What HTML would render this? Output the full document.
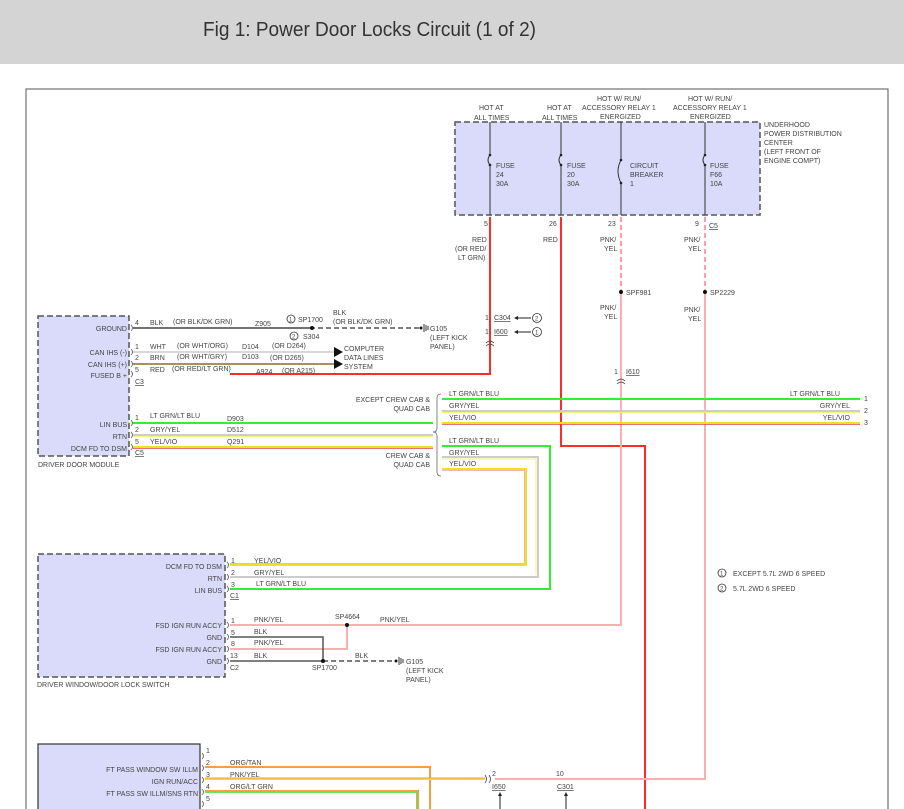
<!DOCTYPE html>
<html><head><meta charset="utf-8"><style>
html,body{margin:0;padding:0;background:#fff;width:904px;height:809px;overflow:hidden}
svg{display:block}
text{font-family:"Liberation Sans",Arial,sans-serif;font-size:7px;fill:#444}
.t{font-family:"Liberation Sans",Arial,sans-serif;font-size:20px;fill:#333}
</style></head><body>
<svg width="904" height="809" viewBox="0 0 904 809" xmlns="http://www.w3.org/2000/svg">
<rect x="0" y="0" width="904" height="64" fill="#d4d4d4"/>
<text x="203" y="36" class="t" textLength="333" lengthAdjust="spacingAndGlyphs">Fig 1: Power Door Locks Circuit (1 of 2)</text>
<!-- frame -->
<path d="M26 809V89H888V809" fill="none" stroke="#555" stroke-width="1"/>

<!-- fuse box -->
<rect x="455" y="122" width="305" height="93" fill="#dadafa" stroke="#555" stroke-width="1.5" stroke-dasharray="6,3"/>
<g stroke="#333" stroke-width="1" fill="none">
<path d="M490 122V155M490 165V215"/><path d="M490 155q-4 5 0 10"/>
<path d="M561 122V155M561 165V215"/><path d="M561 155q-4 5 0 10"/>
<path d="M621 122V160M621 183V215"/><path d="M621 160q-6 11 0 23"/>
<path d="M705 122V155M705 165V215"/><path d="M705 155q-4 5 0 10"/>
</g>
<g fill="#222"><circle cx="490" cy="155" r="1.3"/><circle cx="490" cy="165" r="1.3"/><circle cx="561" cy="155" r="1.3"/><circle cx="561" cy="165" r="1.3"/><circle cx="621" cy="160" r="1.3"/><circle cx="621" cy="183" r="1.3"/><circle cx="705" cy="155" r="1.3"/><circle cx="705" cy="165" r="1.3"/></g>
<text x="479" y="110">HOT AT</text><text x="474" y="120">ALL TIMES</text>
<text x="547" y="110">HOT AT</text><text x="542" y="120">ALL TIMES</text>
<text x="597" y="101">HOT W/ RUN/</text><text x="582" y="110">ACCESSORY RELAY 1</text><text x="600" y="119">ENERGIZED</text>
<text x="688" y="101">HOT W/ RUN/</text><text x="673" y="110">ACCESSORY RELAY 1</text><text x="690" y="119">ENERGIZED</text>
<text x="764" y="127">UNDERHOOD</text><text x="764" y="136">POWER DISTRIBUTION</text><text x="764" y="145">CENTER</text><text x="764" y="154">(LEFT FRONT OF</text><text x="764" y="163">ENGINE COMPT)</text>
<text x="496" y="168">FUSE</text><text x="496" y="177">24</text><text x="496" y="186">30A</text>
<text x="567" y="168">FUSE</text><text x="567" y="177">20</text><text x="567" y="186">30A</text>
<text x="630" y="168">CIRCUIT</text><text x="630" y="177">BREAKER</text><text x="630" y="186">1</text>
<text x="710" y="168">FUSE</text><text x="710" y="177">F66</text><text x="710" y="186">10A</text>
<text x="484" y="226">5</text><text x="549" y="226">26</text><text x="608" y="226">23</text><text x="695" y="226">9</text>
<text x="709" y="228" text-decoration="underline">C5</text>
<text x="472" y="242">RED</text><text x="455" y="251">(OR RED/</text><text x="458" y="260">LT GRN)</text>
<text x="543" y="242">RED</text>
<text x="600" y="242">PNK/</text><text x="604" y="251">YEL</text>
<text x="684" y="242">PNK/</text><text x="688" y="251">YEL</text>

<!-- red wires -->
<path d="M490 217V374H230" fill="none" stroke="#ff2a2a" stroke-width="2"/>
<path d="M561 217V446H645V809" fill="none" stroke="#ff2a2a" stroke-width="2"/>
<!-- pink dashed then solid -->
<path d="M621 217V292M705 217V292" stroke="#f8a0b0" stroke-width="2" stroke-dasharray="5,3"/>
<path d="M621 292V625H230" fill="none" stroke="#f9b0b0" stroke-width="2"/>
<path d="M705 292V779H495" fill="none" stroke="#f9b0b0" stroke-width="2"/>
<circle cx="621" cy="292" r="2" fill="#111"/><circle cx="705" cy="292" r="2" fill="#111"/>
<text x="626" y="295">SPF981</text><text x="710" y="295">SP2229</text>
<text x="600" y="310">PNK/</text><text x="604" y="319">YEL</text>
<text x="684" y="312">PNK/</text><text x="688" y="321">YEL</text>
<text x="614" y="374">1</text><text x="626" y="374" text-decoration="underline">I610</text>
<path d="M617 381q4-4 8 0M617 384q4-4 8 0" fill="none" stroke="#444" stroke-width=".8"/>

<!-- C304/I600 -->
<text x="485" y="320">1</text><text x="494" y="320" text-decoration="underline">C304</text>
<text x="485" y="334">1</text><text x="494" y="334" text-decoration="underline">I600</text>
<path d="M516 318H531M516 332H531" stroke="#222"/><path d="M514 318l4-2v4zM514 332l4-2v4z" fill="#222"/>
<circle cx="537" cy="318" r="4.5" fill="none" stroke="#333" stroke-width=".8"/><text x="535" y="320.5" style="font-size:6px">2</text>
<circle cx="537" cy="332" r="4.5" fill="none" stroke="#333" stroke-width=".8"/><text x="535" y="334.5" style="font-size:6px">1</text>
<path d="M486 343q4-4 8 0M486 346q4-4 8 0" fill="none" stroke="#444" stroke-width=".8"/>

<!-- driver door module -->
<rect x="38" y="316" width="91" height="140" fill="#dadafa" stroke="#555" stroke-width="1.5" stroke-dasharray="6,3"/>
<g text-anchor="end"><text x="127" y="331">GROUND</text><text x="127" y="355">CAN IHS (-)</text><text x="127" y="367">CAN IHS (+)</text><text x="127" y="378">FUSED B +</text><text x="127" y="427">LIN BUS</text><text x="127" y="439">RTN</text><text x="127" y="451">DCM FD TO DSM</text></g>
<text x="38" y="467">DRIVER DOOR MODULE</text>
<g fill="none" stroke="#555" stroke-width=".8"><path d="M131 325q3 3 0 6M131 349q3 3 0 6M131 361q3 3 0 6M131 371q3 3 0 6M131 420q3 3 0 6M131 432q3 3 0 6M131 444q3 3 0 6"/></g>
<path d="M133 328H310" stroke="#444" stroke-width="1.5"/>
<path d="M310 328H420" stroke="#555" stroke-width="1.5" stroke-dasharray="5,3"/>
<circle cx="312" cy="328" r="2" fill="#111"/><circle cx="421" cy="328" r="1.5" fill="#111"/>
<path d="M424 324V332M426 325V331M428 326V330" stroke="#333"/>
<text x="430" y="331">G105</text><text x="430" y="340">(LEFT KICK</text><text x="430" y="349">PANEL)</text>
<circle cx="291" cy="319" r="4" fill="none" stroke="#333" stroke-width=".8"/><text x="289" y="321.5" style="font-size:6px">1</text><text x="298" y="322">SP1700</text>
<circle cx="294" cy="336" r="4" fill="none" stroke="#333" stroke-width=".8"/><text x="292" y="338.5" style="font-size:6px">2</text><text x="303" y="339">S304</text>
<text x="333" y="315">BLK</text><text x="333" y="324">(OR BLK/DK GRN)</text>
<text x="135" y="325">4</text><text x="150" y="325">BLK</text><text x="173" y="324">(OR BLK/DK GRN)</text><text x="255" y="326">Z905</text>
<path d="M133 352H335" stroke="#ccc" stroke-width="1.5"/>
<path d="M133 364H335" stroke="#8a6a2a" stroke-width="1.5"/>
<path d="M334 347l9 5-9 5zM334 359l9 5-9 5z" fill="#111"/>
<text x="344" y="351">COMPUTER</text><text x="344" y="360">DATA LINES</text><text x="344" y="369">SYSTEM</text>
<text x="135" y="349">1</text><text x="150" y="349">WHT</text><text x="177" y="348">(OR WHT/ORG)</text><text x="242" y="349">D104</text><text x="272" y="348">(OR D264)</text>
<text x="135" y="360">2</text><text x="150" y="360">BRN</text><text x="177" y="359">(OR WHT/GRY)</text><text x="242" y="359">D103</text><text x="270" y="360">(OR D265)</text>
<text x="135" y="372">5</text><text x="150" y="372">RED</text><text x="172" y="371">(OR RED/LT GRN)</text><text x="256" y="374">A924</text><text x="282" y="373">(OR A215)</text>
<text x="135" y="384" text-decoration="underline">C3</text>
<path d="M133 423H433" stroke="#33ee33" stroke-width="2"/>
<path d="M133 435H433" stroke="#ccc" stroke-width="2"/><path d="M133 436.5H433" stroke="#f0f060" stroke-width=".8"/>
<path d="M133 447H433" stroke="#f2e020" stroke-width="2"/><path d="M133 448.5H433" stroke="#e04040" stroke-width=".8"/>
<text x="135" y="420">1</text><text x="150" y="418">LT GRN/LT BLU</text><text x="227" y="421">D903</text>
<text x="135" y="432">2</text><text x="150" y="432">GRY/YEL</text><text x="227" y="432">D512</text>
<text x="135" y="444">5</text><text x="150" y="444">YEL/VIO</text><text x="227" y="444">Q291</text>
<text x="135" y="455" text-decoration="underline">C5</text>
<path d="M441 394q-4 0-4 4V428q0 4-4 4q4 0 4 4V472q0 4 4 4" fill="none" stroke="#666" stroke-width=".8"/>
<g text-anchor="end"><text x="430" y="402">EXCEPT CREW CAB &amp;</text><text x="430" y="411">QUAD CAB</text><text x="430" y="458">CREW CAB &amp;</text><text x="430" y="467">QUAD CAB</text></g>
<path d="M442 399H860" stroke="#33ee33" stroke-width="2"/>
<path d="M442 411H860" stroke="#ccc" stroke-width="2"/><path d="M442 412.5H860" stroke="#f0f060" stroke-width=".8"/>
<path d="M442 423H860" stroke="#f2e020" stroke-width="2"/><path d="M442 424.5H860" stroke="#e04040" stroke-width=".8"/>
<text x="449" y="396">LT GRN/LT BLU</text><text x="449" y="408">GRY/YEL</text><text x="449" y="420">YEL/VIO</text>
<g text-anchor="end"><text x="840" y="396">LT GRN/LT BLU</text><text x="850" y="408">GRY/YEL</text><text x="850" y="420">YEL/VIO</text></g>
<text x="864" y="401">1</text><text x="864" y="413">2</text><text x="864" y="425">3</text>
<path d="M442 446H550V589H230" fill="none" stroke="#33ee33" stroke-width="2"/>
<path d="M442 457H538V577H230" fill="none" stroke="#ccc" stroke-width="2"/><path d="M442 459H536V575" fill="none" stroke="#f0f060" stroke-width=".8"/>
<path d="M442 469H526V565H230" fill="none" stroke="#f2e020" stroke-width="2"/><path d="M442 470.5H524.5V563.5H230" fill="none" stroke="#f0a0a0" stroke-width=".8"/>
<text x="449" y="443">LT GRN/LT BLU</text><text x="449" y="455">GRY/YEL</text><text x="449" y="466">YEL/VIO</text>

<!-- driver window switch -->
<rect x="38" y="554" width="187" height="123" fill="#dadafa" stroke="#555" stroke-width="1.5" stroke-dasharray="6,3"/>
<g text-anchor="end"><text x="222" y="569">DCM FD TO DSM</text><text x="222" y="581">RTN</text><text x="222" y="593">LIN BUS</text><text x="222" y="628">FSD IGN RUN ACCY</text><text x="222" y="640">GND</text><text x="222" y="652">FSD IGN RUN ACCY</text><text x="222" y="664">GND</text></g>
<text x="37" y="687">DRIVER WINDOW/DOOR LOCK SWITCH</text>
<g fill="none" stroke="#555" stroke-width=".8"><path d="M227 562q3 3 0 6M227 574q3 3 0 6M227 586q3 3 0 6M227 622q3 3 0 6M227 634q3 3 0 6M227 646q3 3 0 6M227 658q3 3 0 6"/></g>
<text x="231" y="563">1</text><text x="254" y="563">YEL/VIO</text>
<text x="231" y="575">2</text><text x="254" y="575">GRY/YEL</text>
<text x="231" y="587">3</text><text x="256" y="586">LT GRN/LT BLU</text>
<text x="230" y="598" text-decoration="underline">C1</text>
<path d="M230 649H347V625" fill="none" stroke="#f9b0b0" stroke-width="2"/>
<path d="M230 637H323V661H230" fill="none" stroke="#555" stroke-width="1.5"/>
<path d="M323 661H395" stroke="#555" stroke-width="1.5" stroke-dasharray="5,3"/>
<circle cx="347" cy="625" r="2" fill="#111"/><circle cx="323" cy="661" r="2" fill="#111"/><circle cx="396" cy="661" r="1.5" fill="#111"/>
<path d="M399 657V665M401 658V664M403 659V663" stroke="#333"/>
<text x="406" y="664">G105</text><text x="406" y="673">(LEFT KICK</text><text x="406" y="682">PANEL)</text>
<text x="335" y="619">SP4664</text><text x="380" y="622">PNK/YEL</text>
<text x="231" y="623">1</text><text x="254" y="622">PNK/YEL</text>
<text x="231" y="635">5</text><text x="254" y="634">BLK</text>
<text x="231" y="646">8</text><text x="254" y="645">PNK/YEL</text>
<text x="230" y="658">13</text><text x="254" y="658">BLK</text>
<text x="230" y="670">C2</text><text x="312" y="670">SP1700</text><text x="355" y="658">BLK</text>

<!-- legend -->
<circle cx="722" cy="573" r="4" fill="none" stroke="#333" stroke-width=".8"/><text x="720" y="575.5" style="font-size:6px">1</text><text x="733" y="576">EXCEPT 5.7L 2WD 6 SPEED</text>
<circle cx="722" cy="588" r="4" fill="none" stroke="#333" stroke-width=".8"/><text x="720" y="590.5" style="font-size:6px">2</text><text x="733" y="591">5.7L 2WD 6 SPEED</text>

<!-- bottom module -->
<rect x="38" y="744" width="162" height="70" fill="#dadafa" stroke="#333" stroke-width="1.2"/>
<g text-anchor="end"><text x="198" y="772">FT PASS WINDOW SW ILLM</text><text x="198" y="784">IGN RUN/ACC</text><text x="198" y="796">FT PASS SW ILLM/SNS RTN</text></g>
<g fill="none" stroke="#555" stroke-width=".8"><path d="M202 753q3 3 0 6M202 765q3 3 0 6M202 777q3 3 0 6M202 789q3 3 0 6M202 801q3 3 0 6"/></g>
<text x="206" y="753">1</text><text x="206" y="765">2</text><text x="206" y="777">3</text><text x="206" y="789">4</text><text x="206" y="801">5</text>
<text x="230" y="765">ORG/TAN</text><text x="230" y="777">PNK/YEL</text><text x="230" y="789">ORG/LT GRN</text>
<path d="M205 767H430V809" fill="none" stroke="#f0a040" stroke-width="2"/>
<path d="M205 779H485" stroke="#f2e020" stroke-width="2"/><path d="M205 778H485" stroke="#f0a040" stroke-width="1"/>
<path d="M205 791H418V809" fill="none" stroke="#f0a040" stroke-width="2"/><path d="M205 792.5H416.5V809" fill="none" stroke="#33dd33" stroke-width=".8"/>
<path d="M485 775q3 4 0 8M489 775q3 4 0 8" fill="none" stroke="#444" stroke-width=".8"/>
<text x="492" y="776">2</text><text x="556" y="776">10</text>
<text x="492" y="789" text-decoration="underline">I650</text><text x="557" y="789" text-decoration="underline">C301</text>
<path d="M500 794V809M566 794V809" stroke="#222"/><path d="M500 792l-2 4h4zM566 792l-2 4h4z" fill="#222"/>
</svg>
</body></html>
